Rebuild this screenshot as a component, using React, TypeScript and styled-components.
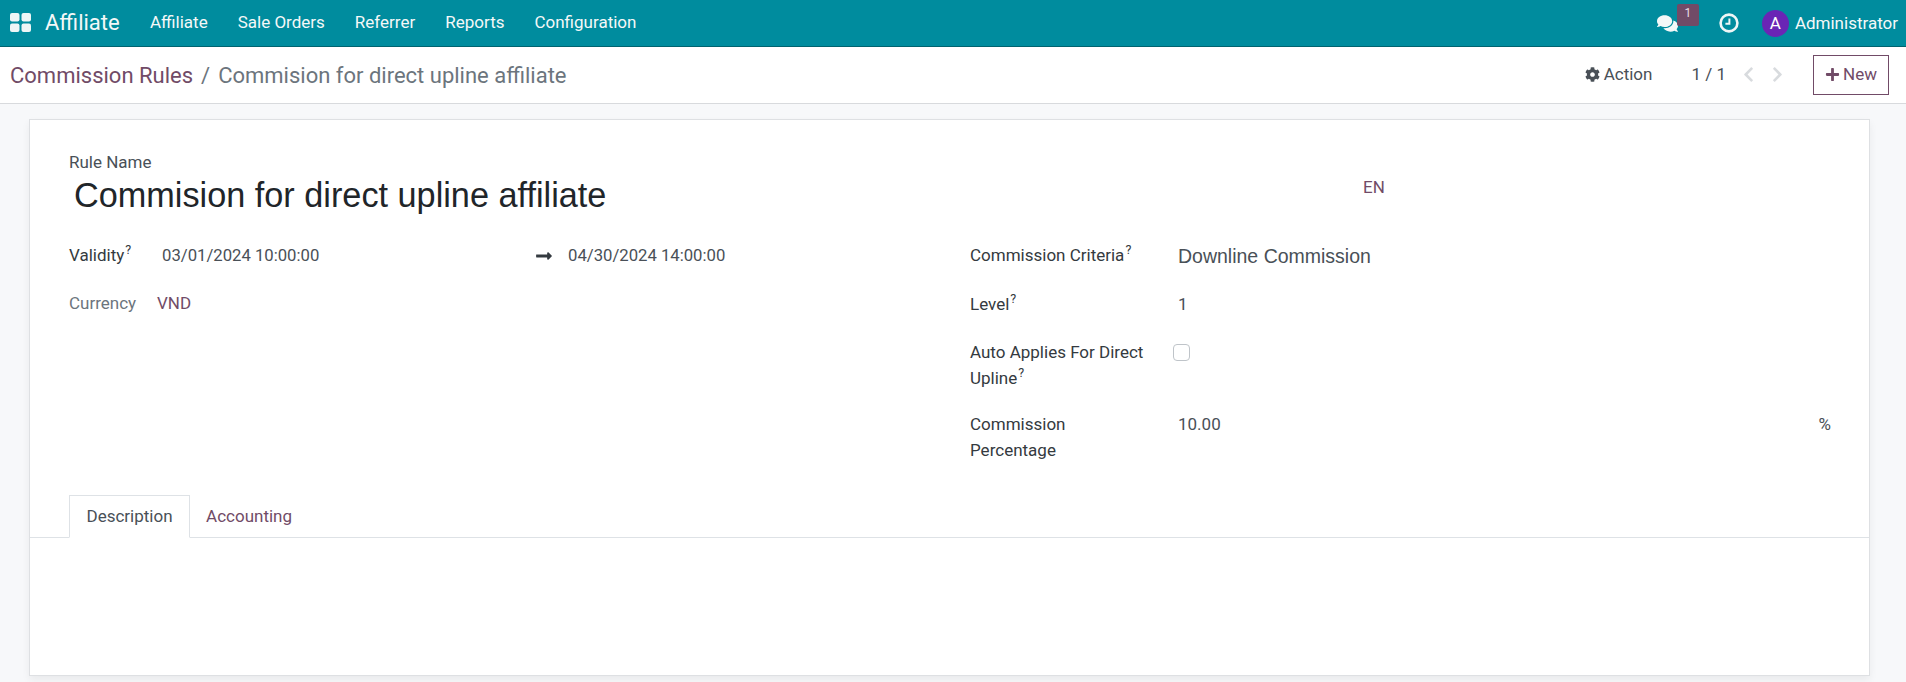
import { ReactNode } from "react";
import styled, { createGlobalStyle } from "styled-components";
import {
  FaChevronLeft,
  FaChevronRight,
  FaCog,
  FaComments,
  FaLongArrowAltRight,
  FaPlus,
} from "react-icons/fa";

const GlobalStyle = createGlobalStyle`
  html, body {
    margin: 0;
    padding: 0;
    background: #f7f8fa;
    font-family: Roboto, "Liberation Sans", sans-serif;
    color: #495057;
  }
  * { box-sizing: border-box; }
`;

const menuItems = ["Affiliate", "Sale Orders", "Referrer", "Reports", "Configuration"];

const Page = styled.div`
  width: 1906px;
  height: 682px;
  overflow: hidden;
`;

const Navbar = styled.header`
  height: 47px;
  background: #008c9e;
  border-bottom: 1px solid #00636f;
  display: flex;
  align-items: center;
  padding: 0 8px 0 10px;
  color: #f4f8f8;
`;

const AppsIcon = styled.svg`
  width: 21px;
  height: 19px;
  margin: 0 14px 2px 0;
  fill: #eef6f6;
`;

const Brand = styled.span`
  font-size: 22px;
  width: 105px;
  margin-bottom: 2px;
`;

const MenuItem = styled.span`
  font-size: 17px;
  margin: 0 30px 2px 0;
`;

const Systray = styled.div`
  margin-left: auto;
  display: flex;
  align-items: center;
  font-size: 17px;
`;

const ChatButton = styled.div`
  position: relative;
  display: flex;
  width: 21px;
  font-size: 21px;
  margin-right: 41px;
`;

const Badge = styled.span`
  position: absolute;
  left: 20px;
  top: -9px;
  width: 22px;
  height: 22px;
  border-radius: 2px;
  background: #714b67;
  color: #e8dde5;
  font-size: 12px;
  display: flex;
  align-items: center;
  justify-content: center;
  padding-bottom: 3px;
`;

const ClockIcon = styled.svg`
  width: 20px;
  height: 20px;
  margin-right: 23px;
  fill: none;
  stroke: #eef6f6;
`;

const Avatar = styled.span`
  width: 27px;
  height: 27px;
  border-radius: 50%;
  background: #6a25b5;
  color: #fff;
  font-size: 17px;
  display: flex;
  align-items: center;
  justify-content: center;
  margin-right: 6px;
`;

const ControlPanel = styled.div`
  height: 57px;
  background: #fff;
  border-bottom: 1px solid #d8dadd;
  display: flex;
  align-items: center;
  padding: 0 17px 0 10px;
`;

const Breadcrumb = styled.div`
  font-size: 22px;
  color: #6c757d;
  display: flex;
  align-items: center;
`;

const CrumbLink = styled.span`
  color: #714b67;
`;

const CrumbSeparator = styled.span`
  margin: 0 8px;
`;

const PanelActions = styled.div`
  margin-left: auto;
  display: flex;
  align-items: center;
  font-size: 17px;
  margin-bottom: 2px;
`;

const ActionButton = styled.span`
  display: flex;
  align-items: center;
  gap: 4px;
  margin-right: 39px;
  svg {
    font-size: 15px;
  }
`;

const Pager = styled.span`
  margin-right: 14px;
`;

const PagerArrow = styled.span<{ $last?: boolean }>`
  display: flex;
  font-size: 17px;
  color: #d8dbde;
  margin-right: ${(p) => (p.$last ? "27px" : "12px")};
`;

const NewButton = styled.button`
  width: 76px;
  height: 40px;
  border: 1px solid #714b67;
  background: #fff;
  color: #714b67;
  font-family: inherit;
  font-size: 17px;
  display: flex;
  align-items: center;
  justify-content: center;
  gap: 3px;
  padding: 0 0 2px;
  position: relative;
  top: 1px;
  svg {
    font-size: 15px;
  }
`;

const Sheet = styled.main`
  width: 1841px;
  height: 557px;
  margin: 15px 0 0 29px;
  background: #fff;
  border: 1px solid #dee0e3;
  box-shadow: 0 4px 8px rgba(0, 0, 0, 0.06);
  padding-top: 32px;
`;

const TitleRow = styled.div`
  display: grid;
  grid-template-columns: 1294px auto;
  padding-left: 39px;
`;

const TitleLabel = styled.div`
  font-size: 17px;
  line-height: 20px;
`;

const Title = styled.h1`
  margin: 3px 0 0 5px;
  font-family: "Liberation Sans", Arial, sans-serif;
  font-size: 34.25px;
  line-height: 40px;
  font-weight: 400;
  color: #212529;
`;

const LangTag = styled.span`
  color: #714b67;
  font-size: 17px;
  align-self: center;
  margin-top: 6px;
`;

const FormGrid = styled.div`
  display: grid;
  grid-template-columns: 901px 1fr;
  padding: 0 38px 0 39px;
  margin-top: 28px;
  height: 252px;
`;

const FieldColumn = styled.div<{ $gap: number }>`
  display: flex;
  flex-direction: column;
  gap: ${(p) => p.$gap}px;
`;

const Row = styled.div<{ $label: number; $tight?: boolean }>`
  display: grid;
  grid-template-columns: ${(p) => p.$label}px 1fr auto;
  line-height: 25.5px;
  font-size: 17px;
  align-items: start;
  margin-top: ${(p) => (p.$tight ? "-2px" : "0")};
`;

const Label = styled.label<{ $muted?: boolean }>`
  color: ${(p) => (p.$muted ? "#6c757d" : "#343a40")};
  sup {
    font-size: 12.5px;
    line-height: 0;
    margin-left: 1px;
  }
`;

const DateRange = styled.div`
  display: grid;
  grid-template-columns: 373px 33px auto;
  align-items: center;
  font-size: 16.7px;
`;

const RangeArrow = styled(FaLongArrowAltRight)`
  font-size: 18px;
  color: #343a40;
`;

const LinkValue = styled.span`
  color: #714b67;
`;

const LargeValue = styled.span`
  font-family: "Liberation Sans", Arial, sans-serif;
  font-size: 19.5px;
  position: relative;
  top: 1px;
`;

const Checkbox = styled.span`
  display: block;
  width: 17px;
  height: 17px;
  margin: 4px 0 0 -5px;
  border: 1px solid #bfc4c9;
  border-radius: 4px;
  background: #fff;
`;

const Tabs = styled.div`
  height: 43px;
  display: flex;
  padding-left: 39px;
  border-bottom: 1px solid #dee2e6;
`;

const Tab = styled.div<{ $active?: boolean }>`
  height: 43px;
  font-size: 17px;
  padding: 0 ${(p) => (p.$active ? "16.5px" : "15px")} 2px;
  display: flex;
  align-items: center;
  color: ${(p) => (p.$active ? "#495057" : "#714b67")};
  background: ${(p) => (p.$active ? "#fff" : "transparent")};
  border: 1px solid ${(p) => (p.$active ? "#dee2e6" : "transparent")};
  border-bottom-color: ${(p) => (p.$active ? "#fff" : "transparent")};
`;

const Help = ({ children }: { children: ReactNode }) => (
  <Label>
    {children}
    <sup>?</sup>
  </Label>
);

export default function App() {
  return (
    <Page>
      <GlobalStyle />
      <Navbar>
        <AppsIcon viewBox="0 0 21 19">
          <rect x="0" y="0" width="9.5" height="8.5" rx="2" />
          <rect x="11.5" y="0" width="9.5" height="8.5" rx="2" />
          <rect x="0" y="10.5" width="9.5" height="8.5" rx="2" />
          <rect x="11.5" y="10.5" width="9.5" height="8.5" rx="2" />
        </AppsIcon>
        <Brand>Affiliate</Brand>
        {menuItems.map((item) => (
          <MenuItem key={item}>{item}</MenuItem>
        ))}
        <Systray>
          <ChatButton>
            <FaComments />
            <Badge>1</Badge>
          </ChatButton>
          <ClockIcon viewBox="0 0 20 20">
            <circle cx="10" cy="10" r="8.4" strokeWidth="2.6" />
            <path d="M10.4 5.4V10.8H6.4" strokeWidth="2" />
          </ClockIcon>
          <Avatar>A</Avatar>
          Administrator
        </Systray>
      </Navbar>
      <ControlPanel>
        <Breadcrumb>
          <CrumbLink>Commission Rules</CrumbLink>
          <CrumbSeparator>/</CrumbSeparator>
          Commision for direct upline affiliate
        </Breadcrumb>
        <PanelActions>
          <ActionButton>
            <FaCog />
            Action
          </ActionButton>
          <Pager>1 / 1</Pager>
          <PagerArrow>
            <FaChevronLeft />
          </PagerArrow>
          <PagerArrow $last>
            <FaChevronRight />
          </PagerArrow>
          <NewButton>
            <FaPlus />
            New
          </NewButton>
        </PanelActions>
      </ControlPanel>
      <Sheet>
        <TitleRow>
          <div>
            <TitleLabel>Rule Name</TitleLabel>
            <Title>Commision for direct upline affiliate</Title>
          </div>
          <LangTag>EN</LangTag>
        </TitleRow>
        <FormGrid>
          <FieldColumn $gap={22}>
            <Row $label={93}>
              <Help>Validity</Help>
              <DateRange>
                <span>03/01/2024 10:00:00</span>
                <RangeArrow />
                <span>04/30/2024 14:00:00</span>
              </DateRange>
            </Row>
            <Row $label={88}>
              <Label $muted>Currency</Label>
              <LinkValue>VND</LinkValue>
            </Row>
          </FieldColumn>
          <FieldColumn $gap={23}>
            <Row $label={208}>
              <Help>Commission Criteria</Help>
              <LargeValue>Downline Commission</LargeValue>
            </Row>
            <Row $label={208}>
              <Help>Level</Help>
              <span>1</span>
            </Row>
            <Row $label={208}>
              <Help>
                Auto Applies For Direct
                <br />
                Upline
              </Help>
              <Checkbox />
            </Row>
            <Row $label={208} $tight>
              <Label>
                Commission
                <br />
                Percentage
              </Label>
              <span>10.00</span>
              <span>%</span>
            </Row>
          </FieldColumn>
        </FormGrid>
        <Tabs>
          <Tab $active>Description</Tab>
          <Tab>Accounting</Tab>
        </Tabs>
      </Sheet>
    </Page>
  );
}
